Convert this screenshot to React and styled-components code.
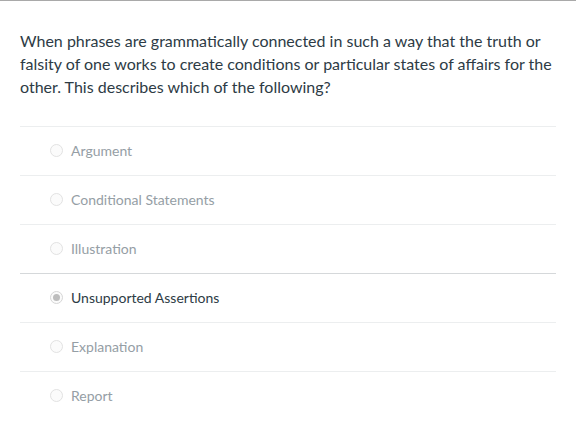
import React from 'react';
import styled, {createGlobalStyle, css} from 'styled-components';

const GlobalStyle = createGlobalStyle`
  body {
    margin: 0;
    background: #fff;
    font-family: Lato, "Liberation Sans", sans-serif;
  }
`;

const Page = styled.div`
  border-top: 1px solid #a9a9a9;
  padding: 28px 20px 0;
`;

const Question = styled.p`
  margin: 0 0 28px;
  font-size: 16px;
  font-weight: 400;
  line-height: 23px;
  color: #2d3b45;
`;

const Answers = styled.div`
  display: flex;
  flex-direction: column;
`;

const Row = styled.label`
  box-sizing: border-box;
  display: flex;
  align-items: center;
  gap: 8px;
  height: 49px;
  padding: 0 0 2px 30px;
  border-top: 1px solid ${props => (props.darkLine ? '#d5d8da' : '#eceeef')};
`;

const Radio = styled.span`
  box-sizing: border-box;
  width: 13px;
  height: 13px;
  border-radius: 50%;
  border: 1px solid #e2e2e2;
  background: #fbfbfb;
  display: flex;
  align-items: center;
  justify-content: center;
  ${props =>
    props.checked &&
    css`
      border-color: #d6d6d6;
      &::after {
        content: '';
        width: 7px;
        height: 7px;
        border-radius: 50%;
        background: #bdbdbd;
      }
    `}
`;

const Label = styled.span`
  font-size: 14px;
  font-weight: 400;
  color: ${props => (props.checked ? '#2d3b45' : '#959ea5')};
`;

const options = [
  'Argument',
  'Conditional Statements',
  'Illustration',
  'Unsupported Assertions',
  'Explanation',
  'Report',
];
const selected = 3;

export default function App() {
  return (
    <Page>
      <GlobalStyle />
      <Question>
        When phrases are grammatically connected in such a way that the truth or falsity of one
        works to create conditions or particular states of affairs for the other. This describes
        which of the following?
      </Question>
      <Answers>
        {options.map((opt, i) => (
          <Row key={opt} darkLine={i === selected}>
            <Radio checked={i === selected} />
            <Label checked={i === selected}>{opt}</Label>
          </Row>
        ))}
      </Answers>
    </Page>
  );
}
